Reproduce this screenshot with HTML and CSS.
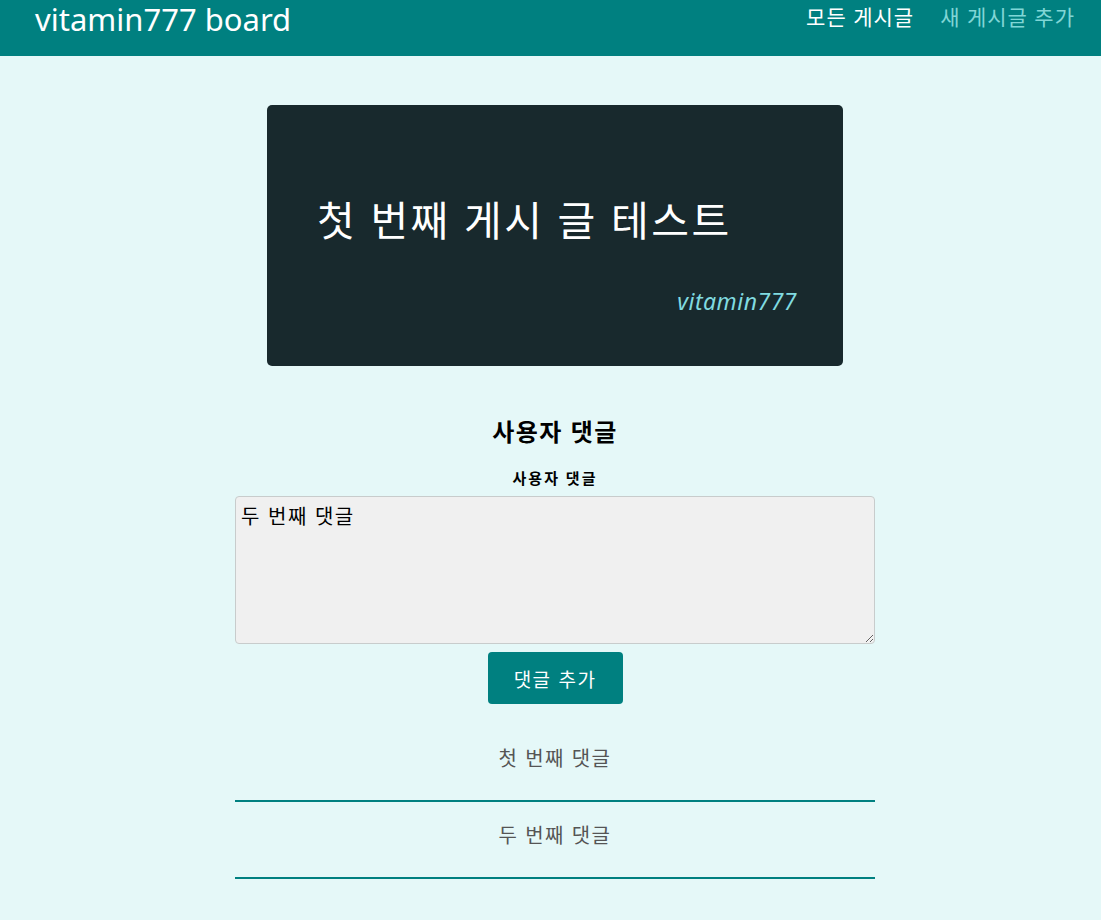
FILE: index.html
```html
<!DOCTYPE html>
<html lang="ko">
<head>
<meta charset="utf-8">
<title>vitamin777 board</title>
<link rel="stylesheet" href="styles.css">
</head>
<body>
<header class="topbar">
  <div class="brand">vitamin777 board</div>
  <nav class="nav">
    <a class="nav-link active" href="#">모든 게시글</a>
    <a class="nav-link" href="#">새 게시글 추가</a>
  </nav>
</header>
<main class="main">
  <article class="post">
    <h2 class="post-title">첫 번째 게시 글 테스트</h2>
    <p class="post-author">vitamin777</p>
  </article>
  <section class="comments">
    <h3 class="comments-title">사용자 댓글</h3>
    <form class="comment-form">
      <label class="comment-label" for="c">사용자 댓글</label>
      <textarea id="c" class="comment-input">두 번째 댓글</textarea>
      <button type="button" class="comment-btn">댓글 추가</button>
    </form>
    <ul class="comment-list">
      <li class="comment-item">첫 번째 댓글</li>
      <li class="comment-item">두 번째 댓글</li>
    </ul>
  </section>
</main>
</body>
</html>
```
FILE: styles.css
```css
* { box-sizing: border-box; }
html, body { margin: 0; padding: 0; }
body {
  background: #e5f8f8;
  font-family: "Noto Sans", "Noto Sans CJK KR", sans-serif;
  color: #000;
}
.topbar {
  height: 56px;
  background: #008080;
  display: flex;
  justify-content: space-between;
  align-items: flex-start;
  padding: 0 26px 0 35px;
}
.brand {
  color: #fff;
  font-size: 31px;
  line-height: 38px;
}
.nav {
  display: flex;
  gap: 26px;
  padding-top: 3px;
}
.nav-link {
  font-size: 21px;
  line-height: 28px;
  letter-spacing: 1px;
  color: #80d6d6;
  text-decoration: none;
}
.nav-link.active { color: #fff; }
.main {
  display: flex;
  flex-direction: column;
  align-items: center;
  padding-left: 9px;
}
.post {
  width: 576px;
  height: 261px;
  margin-top: 49px;
  background: #18292d;
  border-radius: 5px;
  padding: 89px 46px 0 50px;
  display: flex;
  flex-direction: column;
}
.post-title {
  margin: 0;
  color: #fff;
  font-weight: 400;
  font-size: 41px;
  line-height: 52px;
  letter-spacing: 2.5px;
}
.post-author {
  margin: 40px 0 0;
  text-align: right;
  color: #80dbe0;
  font-style: italic;
  font-size: 23px;
  line-height: 30px;
  letter-spacing: 0.5px;
}
.comments {
  width: 640px;
  margin-top: 52px;
  text-align: center;
}
.comments-title {
  margin: 0;
  font-size: 24px;
  line-height: 28px;
  font-weight: 700;
  letter-spacing: 1.5px;
}
.comment-form {
  display: flex;
  flex-direction: column;
  align-items: center;
  margin-top: 22px;
}
.comment-label {
  font-size: 15px;
  line-height: 20px;
  font-weight: 700;
  letter-spacing: 2px;
}
.comment-input {
  margin-top: 8px;
  width: 640px;
  height: 148px;
  background: #f0f0f0;
  border: 1px solid #c8cccc;
  border-radius: 4px;
  padding: 6px 5px;
  font-family: "Noto Sans CJK KR", sans-serif;
  font-size: 20px;
  line-height: 26px;
  letter-spacing: 1.5px;
  color: #000;
  resize: both;
}
.comment-btn {
  margin-top: 8px;
  width: 135px;
  height: 52px;
  background: #008080;
  color: #fff;
  border: none;
  border-radius: 4px;
  font-family: "Noto Sans CJK KR", sans-serif;
  font-size: 19px;
  letter-spacing: 1.5px;
}
.comment-list {
  list-style: none;
  margin: 21px 0 0;
  padding: 0;
}
.comment-item {
  height: 77px;
  padding-top: 20px;
  border-bottom: 2px solid #008080;
  font-size: 20px;
  line-height: 28px;
  letter-spacing: 1.5px;
  color: #555;
}
```
